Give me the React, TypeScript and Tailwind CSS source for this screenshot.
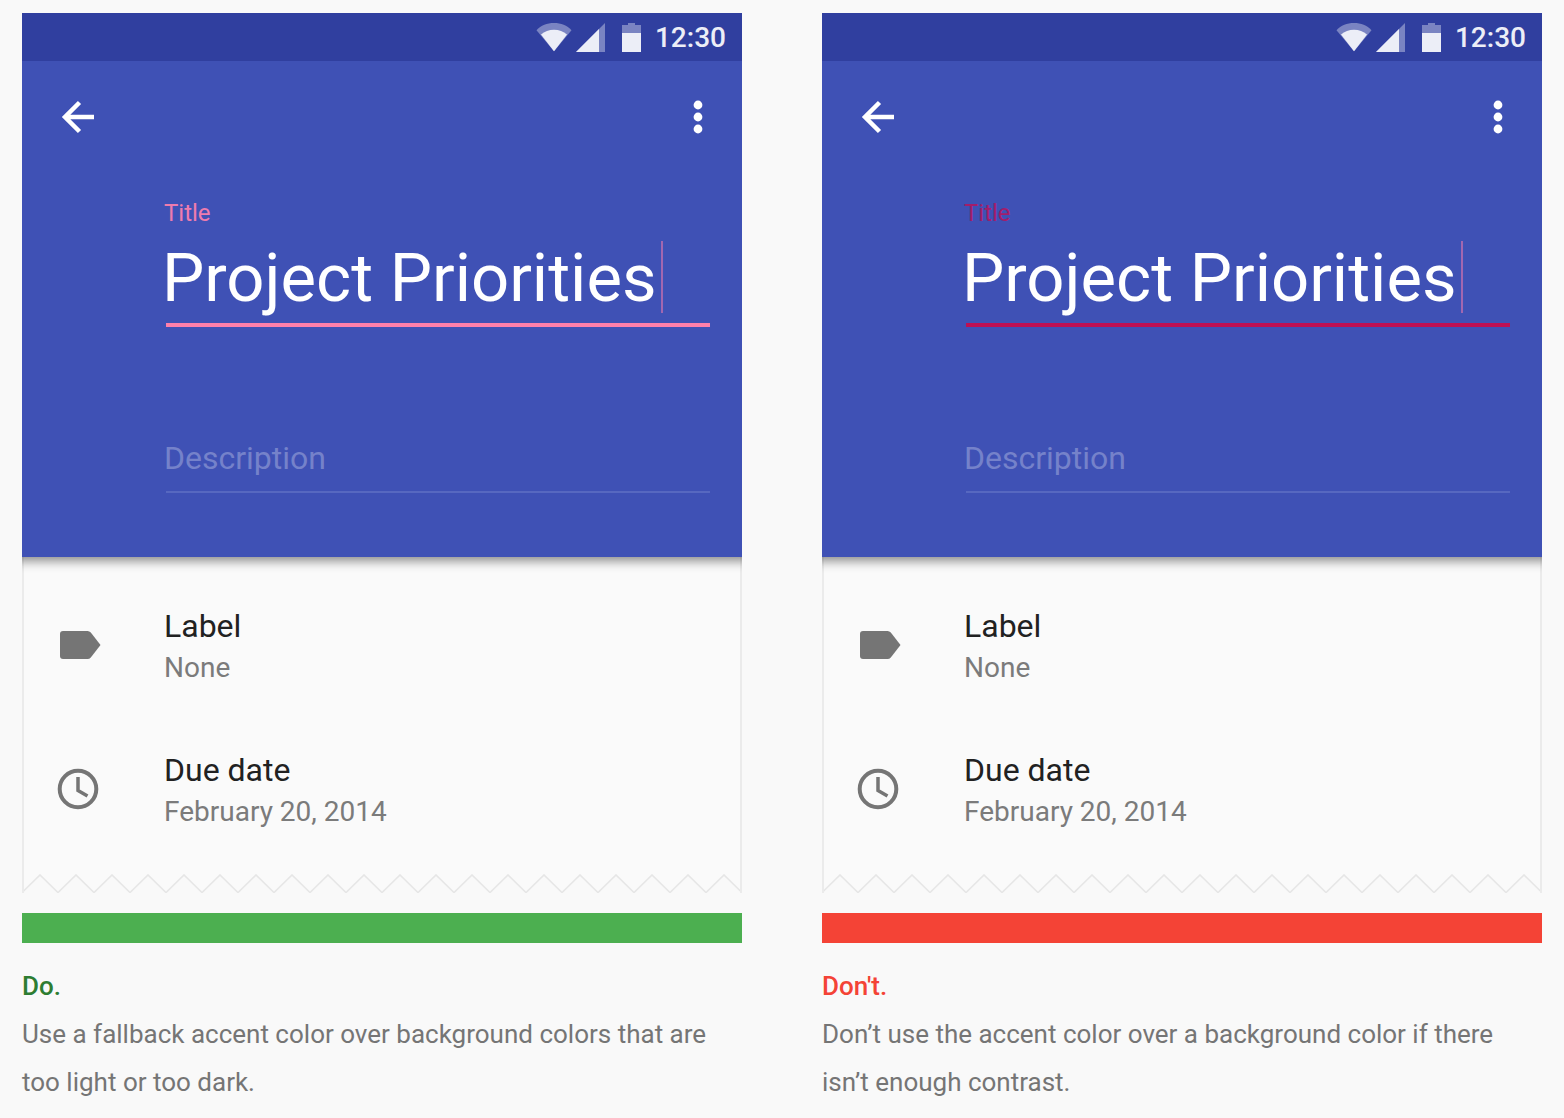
import { useId, type ReactNode } from "react";

type Accent = {
  label: string;
  input: string;
  bar: string;
  heading: string;
};

function StatusBar() {
  return (
    <div className="flex h-12 items-center justify-end bg-[#303f9f] pr-4 text-[#eceef7]">
      <svg width="36" height="30" viewBox="0 0 36 30" fill="currentColor" aria-hidden="true">
        <path d="M18 29.3 0.500 8.200C5 3.400 11 1 18 1s13 2.400 17.500 7.200z" opacity=".4" />
        <path d="M18 29.300 5 12.500C8.500 9.500 13 7.800 18 7.800s9.500 1.700 13 4.700z" />
      </svg>
      <svg className="ml-1" width="30" height="30" viewBox="0 0 30 30" fill="currentColor" aria-hidden="true">
        <path d="M0 30 29 1v29z" opacity=".4" />
        <path d="M0 30 23 7v23z" />
      </svg>
      <svg className="ml-4" width="19" height="30" viewBox="0 0 19 30" fill="currentColor" aria-hidden="true">
        <path d="M0 3h6V1h7v2h6v8H0z" opacity=".4" />
        <path d="M0 11h19v19H0z" />
      </svg>
      <time className="pl-3.5 pt-0.5 text-[28px] font-medium leading-[48px]">12:30</time>
    </div>
  );
}

function AppBar() {
  return (
    <div className="flex h-28 items-center justify-between pl-8 pr-5 text-white">
      <button type="button" aria-label="Back">
        <svg width="48" height="48" viewBox="0 0 48 48" fill="none" stroke="currentColor" aria-hidden="true">
          <path d="M40 24H11M25.500 9.500 11 24l14.500 14.500" strokeWidth="4.500" />
        </svg>
      </button>
      <button type="button" aria-label="More options">
        <svg width="48" height="48" viewBox="0 0 48 48" fill="currentColor" aria-hidden="true">
          <circle cx="24" cy="12" r="4.400" />
          <circle cx="24" cy="24" r="4.400" />
          <circle cx="24" cy="36" r="4.400" />
        </svg>
      </button>
    </div>
  );
}

function Detail({ icon, title, value }: { icon: ReactNode; title: string; value: string }) {
  return (
    <li className="flex items-start">
      <div className="mt-[15px] w-[110px] shrink-0 text-[#757575]">{icon}</div>
      <div>
        <div className="text-[32px] leading-[40px] text-[#212121]">{title}</div>
        <div className="text-[28px] leading-[44px] text-[#7b7b7b]">{value}</div>
      </div>
    </li>
  );
}

function TornEdge() {
  const id = useId();
  return (
    <svg className="block w-full" height="19" aria-hidden="true">
      <defs>
        <pattern id={id} width="36" height="19" patternUnits="userSpaceOnUse">
          <path d="M0 0H36V18.500L18 1 0 18.500z" fill="#fafafa" />
          <path d="M-2 20.500 18 1 38 20.500" fill="none" stroke="#e6e6e6" strokeWidth="1.600" />
        </pattern>
      </defs>
      <rect width="100%" height="19" fill={`url(#${id})`} />
      <line x1="0" x2="0" y1="0" y2="19" stroke="#ebebeb" strokeWidth="4" />
      <line x1="100%" x2="100%" y1="0" y2="19" stroke="#ebebeb" strokeWidth="4" />
    </svg>
  );
}

function Phone({ accent }: { accent: Accent }) {
  const id = useId();
  return (
    <div>
      <div className="relative bg-[#3f51b5] shadow-[0_-4px_10px_8px_rgba(0,0,0,0.45)] [clip-path:inset(0_0_-20px_0)]">
        <StatusBar />
        <AppBar />
        <div className="pb-16 pl-[142px] pr-8 pt-6">
          <label htmlFor={`${id}-title`} className={`block text-2xl leading-8 ${accent.label}`}>
            Title
          </label>
          <div className={`ml-0.5 mt-2 flex items-center border-b-4 pb-1.5 ${accent.input}`}>
            <input
              id={`${id}-title`}
              type="text"
              defaultValue="Project Priorities"
              className="-ml-1 h-20 min-w-0 bg-transparent pt-0.5 text-[67px] leading-[78px] text-white outline-none [field-sizing:content]"
            />
            <span className="ml-1 h-[72px] w-0.5 bg-[#a267b0]" aria-hidden="true" />
          </div>
          <div className="mt-[111px]">
            <input
              type="text"
              aria-label="Description"
              placeholder="Description"
              className="block h-10 w-full bg-transparent text-[32px] leading-[40px] text-white outline-none placeholder:text-[#7582ca]"
            />
            <div className="ml-0.5 mt-[13px] h-0.5 bg-[#5768c0]" />
          </div>
        </div>
      </div>
      <div className="border-x-2 border-[#ebebeb] bg-[#fafafa] pb-10 pl-[30px] pt-[49px]">
        <ul className="flex flex-col gap-[60px]">
          <Detail
            title="Label"
            value="None"
            icon={
              <svg width="48" height="48" viewBox="0 0 48 48" fill="currentColor" aria-hidden="true">
                <path d="M9 10H33.500Q35.500 10 36.800 11.600L46.500 24 36.800 36.400Q35.500 38 33.500 38H9Q6 38 6 35V13Q6 10 9 10z" />
              </svg>
            }
          />
          <Detail
            title="Due date"
            value="February 20, 2014"
            icon={
              <svg width="48" height="48" viewBox="0 0 48 48" fill="none" stroke="currentColor" aria-hidden="true">
                <circle cx="24" cy="24" r="18.300" strokeWidth="4" />
                <path d="M24 12v13.500l9.500 5.500" strokeWidth="3.500" />
              </svg>
            }
          />
        </ul>
      </div>
      <TornEdge />
    </div>
  );
}

function Example({ accent, heading, children }: { accent: Accent; heading: string; children: ReactNode }) {
  return (
    <section className="min-w-0">
      <Phone accent={accent} />
      <div className={`mt-5 h-[30px] ${accent.bar}`} />
      <div className="mt-[19px] text-[26px] leading-[48px]">
        <h2 className={`font-medium ${accent.heading}`}>{heading}</h2>
        <p className="text-[#757575]">{children}</p>
      </div>
    </section>
  );
}

const light: Accent = {
  label: "text-[#ee7cae]",
  input: "border-[#ff80ab]",
  bar: "bg-[#4caf50]",
  heading: "text-[#2e7d32]",
};

const dark: Accent = {
  label: "text-[#a31d6b]",
  input: "border-[#bd1053]",
  bar: "bg-[#f44336]",
  heading: "text-[#f44336]",
};

export default function App() {
  return (
    <main className="grid min-h-screen grid-cols-2 content-start gap-x-20 bg-[#f9f9f9] px-[22px] pt-[13px] font-[Roboto,sans-serif]">
      <Example accent={light} heading="Do.">
        Use a fallback accent color over background colors that are too light or too dark.
      </Example>
      <Example accent={dark} heading="Don't.">
        Don’t use the accent color over a background color if there isn’t enough contrast.
      </Example>
    </main>
  );
}
